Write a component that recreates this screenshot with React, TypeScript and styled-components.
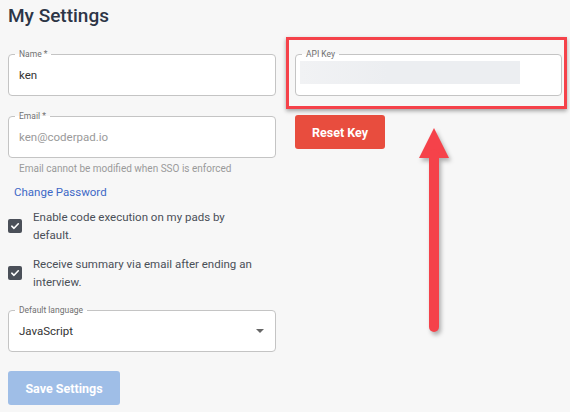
import styled, { createGlobalStyle } from "styled-components";

const GlobalStyle = createGlobalStyle`
  body {
    margin: 0;
    background: #f7f7f7;
    font-family: Roboto, "Liberation Sans", sans-serif;
  }
`;

const Page = styled.div`
  position: relative;
  width: 570px;
  height: 412px;
  box-sizing: border-box;
  padding: 4px 8px 0;
  overflow: hidden;
`;

const Title = styled.h1`
  margin: 0;
  font-size: 19px;
  line-height: 24px;
  font-weight: 500;
  color: #2d3546;
`;

const Columns = styled.div`
  display: grid;
  grid-template-columns: 268px 267px;
  column-gap: 19px;
  margin-top: 26px;
  align-items: start;
`;

const LeftColumn = styled.div`
  display: flex;
  flex-direction: column;
`;

const RightColumn = styled.div`
  display: flex;
  flex-direction: column;
  align-items: flex-start;
  gap: 19px;
`;

const FieldBox = styled.div<{ $top?: number; $align?: string }>`
  position: relative;
  width: 100%;
  height: 42px;
  box-sizing: border-box;
  margin-top: ${(p) => p.$top ?? 0}px;
  border: 1px solid #c4c4c4;
  border-radius: 4px;
  background: #fff;
  display: flex;
  align-items: ${(p) => p.$align ?? "center"};
  justify-content: space-between;
  padding: 0 10px;
`;

const FieldLabel = styled.span`
  position: absolute;
  top: -6px;
  left: 6px;
  padding: 0 4px;
  font-size: 8.5px;
  line-height: 10px;
  color: #707070;
  background: linear-gradient(to bottom, #f7f7f7 50%, #fff 50%);
`;

const Value = styled.span<{ $muted?: boolean }>`
  font-size: 11.5px;
  color: ${(p) => (p.$muted ? "#9a9a9a" : "#333")};
`;

const Helper = styled.div`
  margin-top: 4px;
  padding-left: 11px;
  font-size: 10px;
  line-height: 14px;
  color: #9a9a9a;
`;

const LinkText = styled.a`
  margin-top: 8px;
  padding-left: 6px;
  font-size: 11.5px;
  line-height: 16px;
  color: #3d68c6;
  text-decoration: none;
`;

const CheckRow = styled.label<{ $top: number }>`
  display: flex;
  align-items: center;
  gap: 11px;
  margin-top: ${(p) => p.$top}px;
`;

const CheckBox = styled.span`
  flex: none;
  width: 14px;
  height: 14px;
  border-radius: 2px;
  background: #4b5059;
  display: flex;
  align-items: center;
  justify-content: center;
`;

const CheckText = styled.span`
  width: 228px;
  font-size: 11.5px;
  line-height: 18px;
  color: #4a4f58;
`;

const Caret = styled.span`
  width: 0;
  height: 0;
  margin-right: 1px;
  border-left: 4px solid transparent;
  border-right: 4px solid transparent;
  border-top: 4px solid #666;
`;

const Button = styled.button<{ $bg: string; $width: number; $top?: number }>`
  width: ${(p) => p.$width}px;
  height: 34px;
  margin-top: ${(p) => p.$top ?? 0}px;
  border: none;
  border-radius: 3px;
  background: ${(p) => p.$bg};
  color: #fff;
  font-family: Roboto, "Liberation Sans", sans-serif;
  font-size: 12.5px;
  font-weight: 700;
  padding: 0;
`;

const KeyField = styled.div`
  position: relative;
  width: 100%;
`;

const Highlight = styled.div`
  position: absolute;
  top: -17px;
  left: -9px;
  right: -5px;
  bottom: -13px;
  border: 3px solid #f5424a;
  box-shadow: 0 2px 4px rgba(0, 0, 0, 0.35);
  pointer-events: none;
`;

const KeyMask = styled.div`
  width: 220px;
  height: 23px;
  margin-left: -6px;
  background: linear-gradient(to right, #f1f2f4, #eceef1 40%, #eceef1);
`;

const Arrow = styled.svg`
  position: absolute;
  left: 414px;
  top: 124px;
  filter: drop-shadow(2px 3px 2px rgba(0, 0, 0, 0.3));
`;

const Check = () => (
  <svg width="10" height="10" viewBox="0 0 10 10">
    <path
      d="M1.8 5.2 L4 7.3 L8.3 2.8"
      fill="none"
      stroke="#fff"
      strokeWidth="1.6"
      strokeLinecap="round"
      strokeLinejoin="round"
    />
  </svg>
);

const App = () => {
  return (
    <Page>
      <GlobalStyle />
      <Title>My Settings</Title>
      <Columns>
        <LeftColumn>
          <FieldBox>
            <FieldLabel>Name *</FieldLabel>
            <Value>ken</Value>
          </FieldBox>
          <FieldBox $top={20}>
            <FieldLabel>Email *</FieldLabel>
            <Value $muted>ken@coderpad.io</Value>
          </FieldBox>
          <Helper>Email cannot be modified when SSO is enforced</Helper>
          <LinkText href="#">Change Password</LinkText>
          <CheckRow $top={8}>
            <CheckBox>
              <Check />
            </CheckBox>
            <CheckText>Enable code execution on my pads by default.</CheckText>
          </CheckRow>
          <CheckRow $top={11}>
            <CheckBox>
              <Check />
            </CheckBox>
            <CheckText>
              Receive summary via email after ending an interview.
            </CheckText>
          </CheckRow>
          <FieldBox $top={19}>
            <FieldLabel>Default language</FieldLabel>
            <Value>JavaScript</Value>
            <Caret />
          </FieldBox>
          <Button $bg="#9fbee7" $width={112} $top={19}>
            Save Settings
          </Button>
        </LeftColumn>
        <RightColumn>
          <KeyField>
            <FieldBox $align="flex-start" style={{ paddingTop: 6 }}>
              <FieldLabel>API Key</FieldLabel>
              <KeyMask />
            </FieldBox>
            <Highlight />
          </KeyField>
          <Button $bg="#e84d3e" $width={90}>
            Reset Key
          </Button>
        </RightColumn>
      </Columns>
      <Arrow width="40" height="215" viewBox="0 0 40 215">
        <path d="M20 4 L35 34 L5 34 Z" fill="#f5424a" />
        <path
          d="M20 30 L20 203"
          stroke="#f5424a"
          strokeWidth="10"
          strokeLinecap="round"
        />
      </Arrow>
    </Page>
  );
};

export default App;
